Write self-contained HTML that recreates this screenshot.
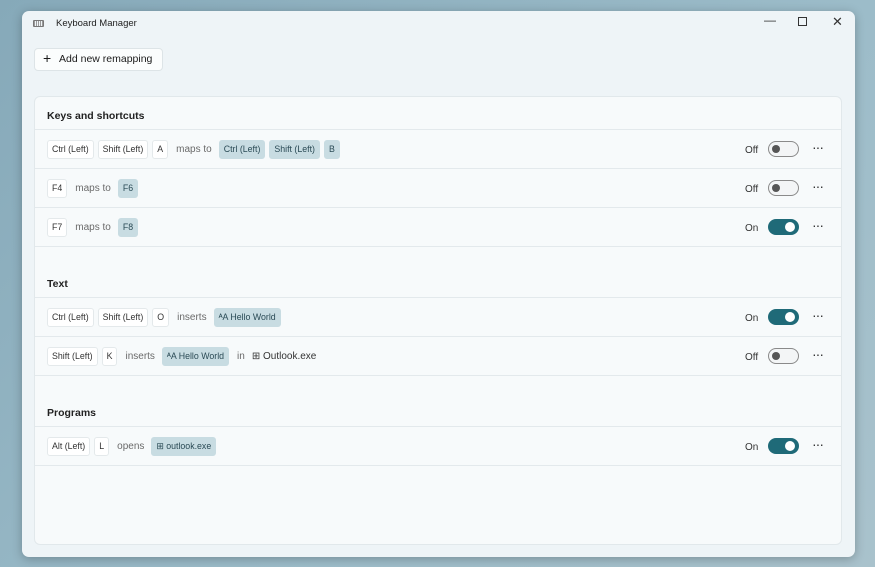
<!DOCTYPE html>
<html><head><style>
*{box-sizing:border-box;margin:0;padding:0}
body{width:875px;height:567px;background:linear-gradient(135deg,#86a9b9,#9cbcc9 60%,#a9c2cc);font-family:"Liberation Sans",sans-serif;position:relative;overflow:hidden;color:#1b1b1b}
.win{position:absolute;left:22px;top:11px;width:833px;height:546px;background:#eef4f7;border-radius:7px;box-shadow:0 2px 10px rgba(0,0,0,.25)}
.title{position:absolute;left:34px;top:7px;font-size:9.5px;color:#222}
.kb{position:absolute;left:11px;top:9px;width:11px;height:7px;border:1px solid #777;border-radius:1px;background:repeating-linear-gradient(90deg,#999 0 1px,transparent 1px 2px)}
.ctl{position:absolute;top:5px;font-size:12px;color:#333}
.add{position:absolute;left:12px;top:37px;width:129px;height:23px;background:#fbfdfd;border:1px solid #dde4e7;border-radius:4px;font-size:10.5px;line-height:21px;padding-left:24px}
.add:before{content:"+";position:absolute;left:8px;top:-1px;font-size:14px}
.card{position:absolute;left:12px;top:85px;width:808px;height:449px;background:#f7fafb;border:1px solid #e1e8eb;border-radius:6px}
.h{position:absolute;left:12px;font-size:10.5px;font-weight:bold;color:#222}
.sep{position:absolute;left:0;right:0;height:1px;background:#e3e9ec}
.row{position:absolute;left:12px;height:20px;display:flex;align-items:center;font-size:8.8px}
.k{height:19px;line-height:17px;padding:0 4px;background:#fff;border:1px solid #e4e9eb;border-radius:3px;margin-right:4px;color:#333}
.m{background:#c8dce2;border-color:#c8dce2;color:#2a4a55}
.t{color:#6a6a6a;font-size:10px;margin:0 7px 0 4px}
.st{position:absolute;left:710px;font-size:10px;color:#333;line-height:16px}
.tg{position:absolute;left:733px;width:31px;height:16px;border-radius:8px}
.off{border:1px solid #8a8a8a;background:#f3f5f6}
.off:after{content:"";position:absolute;left:3px;top:3px;width:8px;height:8px;border-radius:50%;background:#555}
.on{background:#1f6a78}
.on:after{content:"";position:absolute;right:4px;top:3px;width:10px;height:10px;border-radius:50%;background:#fff}
.dots{position:absolute;left:777px;font-size:14px;line-height:16px;color:#333;letter-spacing:-1px}
</style></head><body>
<div class="win">
<div class="kb"></div><div class="title">Keyboard Manager</div>
<div class="ctl" style="left:742px;top:2px">—</div>
<div class="ctl" style="left:776px;top:6px;width:9px;height:9px;border:1px solid #333"></div>
<div class="ctl" style="left:810px;top:3px;font-size:13px">✕</div>
<div class="add">Add new remapping</div>
<div class="card">
<div class="h" style="top:13px">Keys and shortcuts</div>
<div class="sep" style="top:32px"></div>
<div class="row" style="top:42px"><span class="k">Ctrl (Left)</span><span class="k">Shift (Left)</span><span class="k">A</span><span class="t">maps to</span><span class="k m">Ctrl (Left)</span><span class="k m">Shift (Left)</span><span class="k m">B</span></div>
<div class="st" style="top:46px">Off</div><div class="tg off" style="top:44px"></div><div class="dots" style="top:42px">···</div>
<div class="sep" style="top:71px"></div>
<div class="row" style="top:81px"><span class="k">F4</span><span class="t">maps to</span><span class="k m">F6</span></div>
<div class="st" style="top:85px">Off</div><div class="tg off" style="top:83px"></div><div class="dots" style="top:81px">···</div>
<div class="sep" style="top:110px"></div>
<div class="row" style="top:120px"><span class="k">F7</span><span class="t">maps to</span><span class="k m">F8</span></div>
<div class="st" style="top:124px">On</div><div class="tg on" style="top:122px"></div><div class="dots" style="top:120px">···</div>
<div class="sep" style="top:149px"></div>
<div class="h" style="top:181px">Text</div>
<div class="sep" style="top:200px"></div>
<div class="row" style="top:210px"><span class="k">Ctrl (Left)</span><span class="k">Shift (Left)</span><span class="k">O</span><span class="t">inserts</span><span class="k m">ᴬA Hello World</span></div>
<div class="st" style="top:214px">On</div><div class="tg on" style="top:212px"></div><div class="dots" style="top:210px">···</div>
<div class="sep" style="top:239px"></div>
<div class="row" style="top:249px"><span class="k">Shift (Left)</span><span class="k">K</span><span class="t">inserts</span><span class="k m">ᴬA Hello World</span><span class="t">in</span><span style="font-size:10px;color:#333">⊞ Outlook.exe</span></div>
<div class="st" style="top:253px">Off</div><div class="tg off" style="top:251px"></div><div class="dots" style="top:249px">···</div>
<div class="sep" style="top:278px"></div>
<div class="h" style="top:310px">Programs</div>
<div class="sep" style="top:329px"></div>
<div class="row" style="top:339px"><span class="k">Alt (Left)</span><span class="k">L</span><span class="t">opens</span><span class="k m">⊞ outlook.exe</span></div>
<div class="st" style="top:343px">On</div><div class="tg on" style="top:341px"></div><div class="dots" style="top:339px">···</div>
<div class="sep" style="top:368px"></div>
</div>
</div>
</body></html>
